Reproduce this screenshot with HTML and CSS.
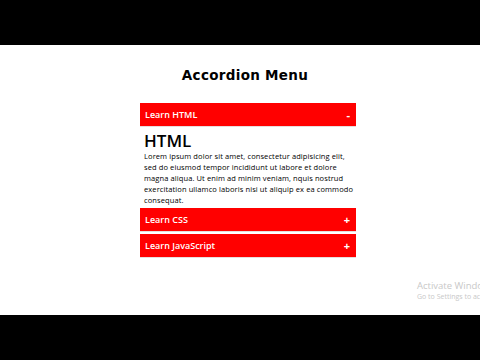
FILE: index.html
```html
<!DOCTYPE html>
<html>
<head>
<meta charset="utf-8">
<link rel="stylesheet" href="styles.css">
</head>
<body>
<div class="frame">
  <div class="bar"></div>
  <main class="stage">
    <h1 class="title">Accordion Menu</h1>
    <div class="accordion">
      <div class="item open">
        <div class="head"><span>Learn HTML</span><span class="sign">-</span></div>
        <div class="body">
          <h2>HTML</h2>
          <p>Lorem ipsum dolor sit amet, consectetur adipisicing elit, sed do eiusmod tempor incididunt ut labore et dolore magna aliqua. Ut enim ad minim veniam, nquis nostrud exercitation ullamco laboris nisi ut aliquip ex ea commodo consequat.</p>
        </div>
      </div>
      <div class="item">
        <div class="head"><span>Learn CSS</span><span class="sign">+</span></div>
      </div>
      <div class="item">
        <div class="head"><span>Learn JavaScript</span><span class="sign">+</span></div>
      </div>
    </div>
    <div class="watermark">
      <div class="wm1">Activate Windows</div>
      <div class="wm2">Go to Settings to activate Windows.</div>
    </div>
  </main>
  <div class="bar"></div>
</div>
</body>
</html>
```

FILE: styles.css
```css
html, body {
  margin: 0;
  padding: 0;
  background: #000;
}
.frame {
  width: 480px;
  height: 360px;
  display: flex;
  flex-direction: column;
  overflow: hidden;
}
.bar {
  height: 45px;
  background: #000;
  flex: none;
}
.stage {
  position: relative;
  height: 270px;
  background: #fff;
  overflow: hidden;
  display: flex;
  flex-direction: column;
  align-items: center;
}
.title {
  margin: 22px 0 0 10px;
  font-family: "DejaVu Sans", Verdana, sans-serif;
  font-weight: bold;
  font-size: 13.5px;
  line-height: 17px;
  color: #000;
  letter-spacing: 0.3px;
}
.accordion {
  width: 216px;
  margin: 19px 0 0 16px;
  display: flex;
  flex-direction: column;
  gap: 2px;
  font-family: "Open Sans", "Noto Sans", sans-serif;
}
.head {
  height: 23px;
  background: #ff0000;
  color: #fff;
  display: flex;
  align-items: center;
  justify-content: space-between;
  padding: 0 6px 0 5px;
  font-size: 9px;
  font-weight: 600;
  border-bottom: 1px solid #e8dcdc;
}
.sign {
  font-size: 11px;
  font-weight: 700;
}
.body {
  padding: 4px 1px 0 4px;
  color: #000;
}
.body h2 {
  margin: 0;
  font-size: 17px;
  font-weight: 600;
  line-height: 20px;
}
.body p {
  margin: 0;
  font-size: 7.5px;
  line-height: 11px;
  font-weight: 500;
  letter-spacing: 0.1px;
}
.watermark {
  position: absolute;
  left: 417px;
  top: 235px;
  white-space: nowrap;
  font-family: "Open Sans", sans-serif;
  color: #c8c8c8;
}
.wm1 {
  font-size: 9.5px;
  line-height: 12px;
}
.wm2 {
  font-size: 7px;
  line-height: 10px;
}
```
